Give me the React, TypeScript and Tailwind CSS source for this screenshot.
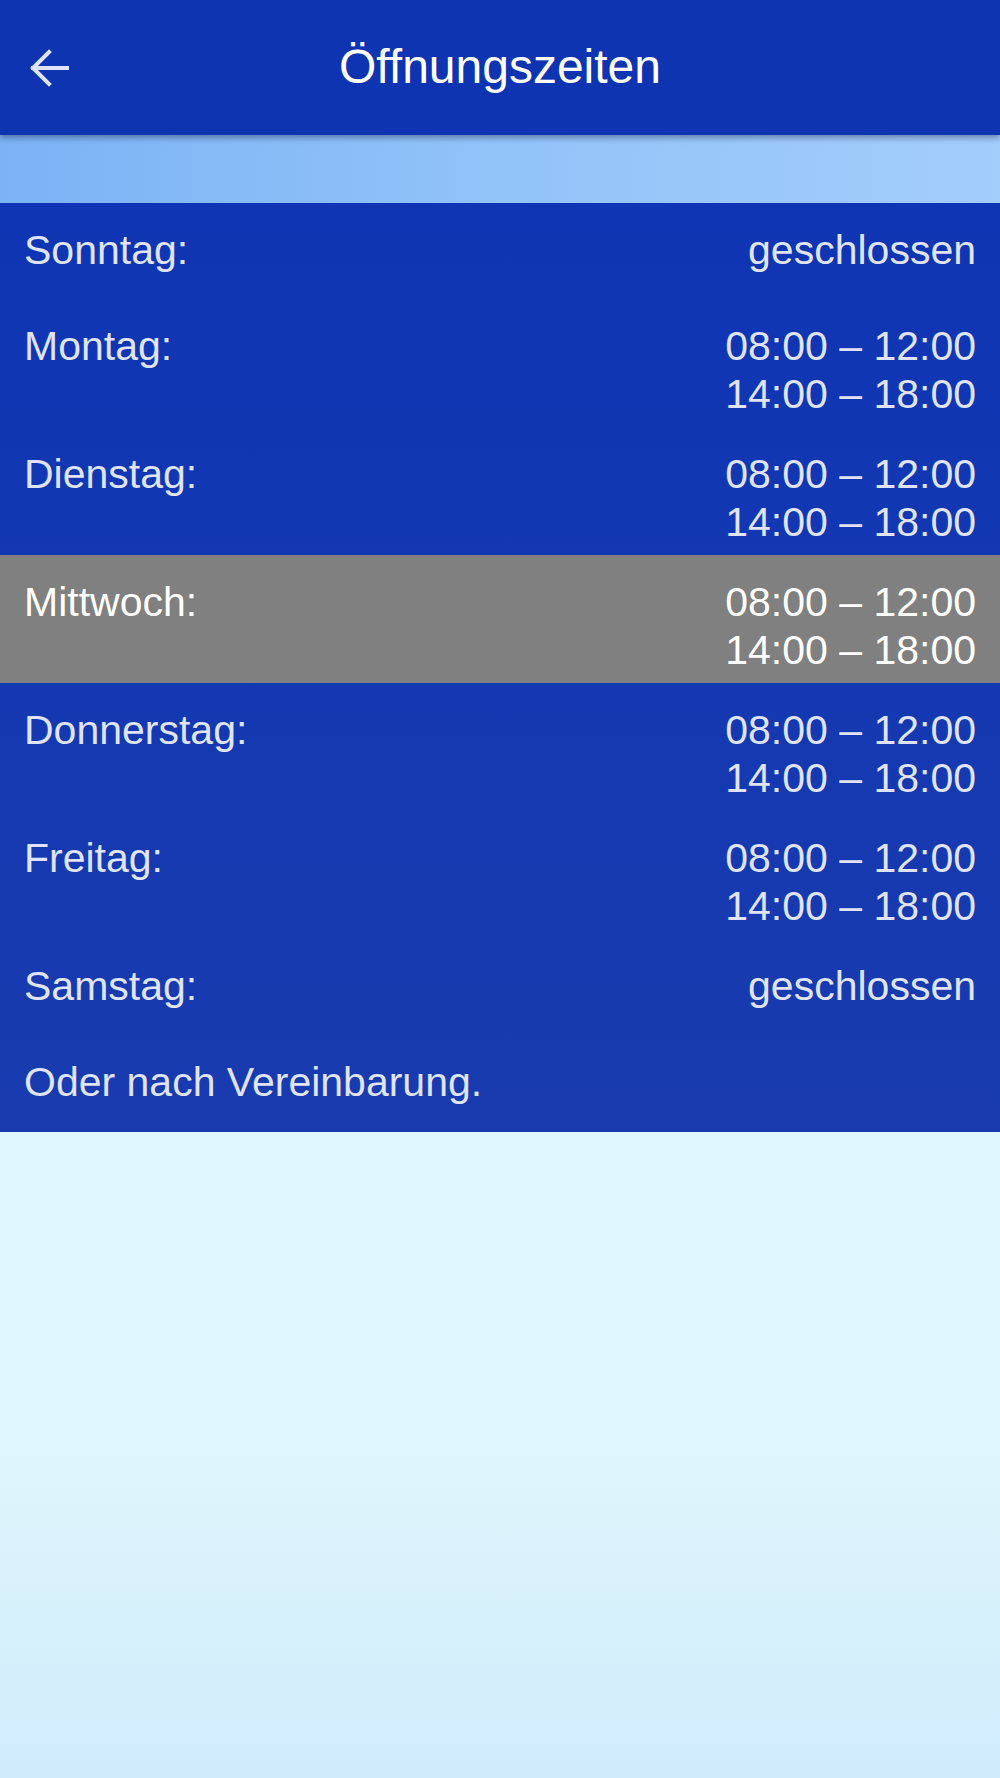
const hours = [
  { day: 'Sonntag:', times: ['geschlossen'] },
  { day: 'Montag:', times: ['08:00 – 12:00', '14:00 – 18:00'] },
  { day: 'Dienstag:', times: ['08:00 – 12:00', '14:00 – 18:00'] },
  { day: 'Mittwoch:', times: ['08:00 – 12:00', '14:00 – 18:00'], today: true },
  { day: 'Donnerstag:', times: ['08:00 – 12:00', '14:00 – 18:00'] },
  { day: 'Freitag:', times: ['08:00 – 12:00', '14:00 – 18:00'] },
  { day: 'Samstag:', times: ['geschlossen'] },
];

function BackArrow() {
  return (
    <svg width="42" height="42" viewBox="0 0 42 42" fill="none" stroke="#dfe3f6" strokeWidth="4" strokeLinecap="square">
      <path d="M39 21H5" />
      <path d="M21 5L5 21l16 16" />
    </svg>
  );
}

export default function App() {
  return (
    <div className="flex min-h-[1778px] w-full flex-col bg-[linear-gradient(180deg,#def7fc_0%,#dff7fc_80%,#d0ebfb_100%)] font-['Liberation_Sans',Arial,sans-serif] text-[#dfe3f5]">
      <header className="relative z-10 flex h-[135px] items-center bg-[#0e34b2] shadow-[0_3px_6px_rgba(0,0,40,0.35)]">
        <button className="ml-[28px] flex h-[42px] w-[42px] items-center justify-center">
          <BackArrow />
        </button>
        <h1 className="absolute left-1/2 top-[42px] -translate-x-1/2 text-[48px] leading-[50px] text-white">
          Öffnungszeiten
        </h1>
      </header>

      <div className="h-[68px] bg-gradient-to-r from-[#7cb3f5] via-[#92c3f9] to-[#a3cdfb]" />

      <section className="bg-gradient-to-b from-[#0f35b4] to-[#193baf] text-[41px] leading-[48px]">
        {hours.map((h) => (
          <div
            key={h.day}
            className={
              h.today
                ? 'flex h-[128px] justify-between bg-[#808080] px-6 pt-[23px] text-white'
                : h.times.length > 1
                  ? 'flex h-[128px] justify-between px-6 pt-[23px]'
                  : 'flex h-[96px] justify-between px-6 pt-[23px]'
            }
          >
            <span>{h.day}</span>
            <div className="flex flex-col items-end">
              {h.times.map((t) => (
                <span key={t}>{t}</span>
              ))}
            </div>
          </div>
        ))}
        <div className="h-[97px] px-6 pt-[23px]">Oder nach Vereinbarung.</div>
      </section>
    </div>
  );
}
